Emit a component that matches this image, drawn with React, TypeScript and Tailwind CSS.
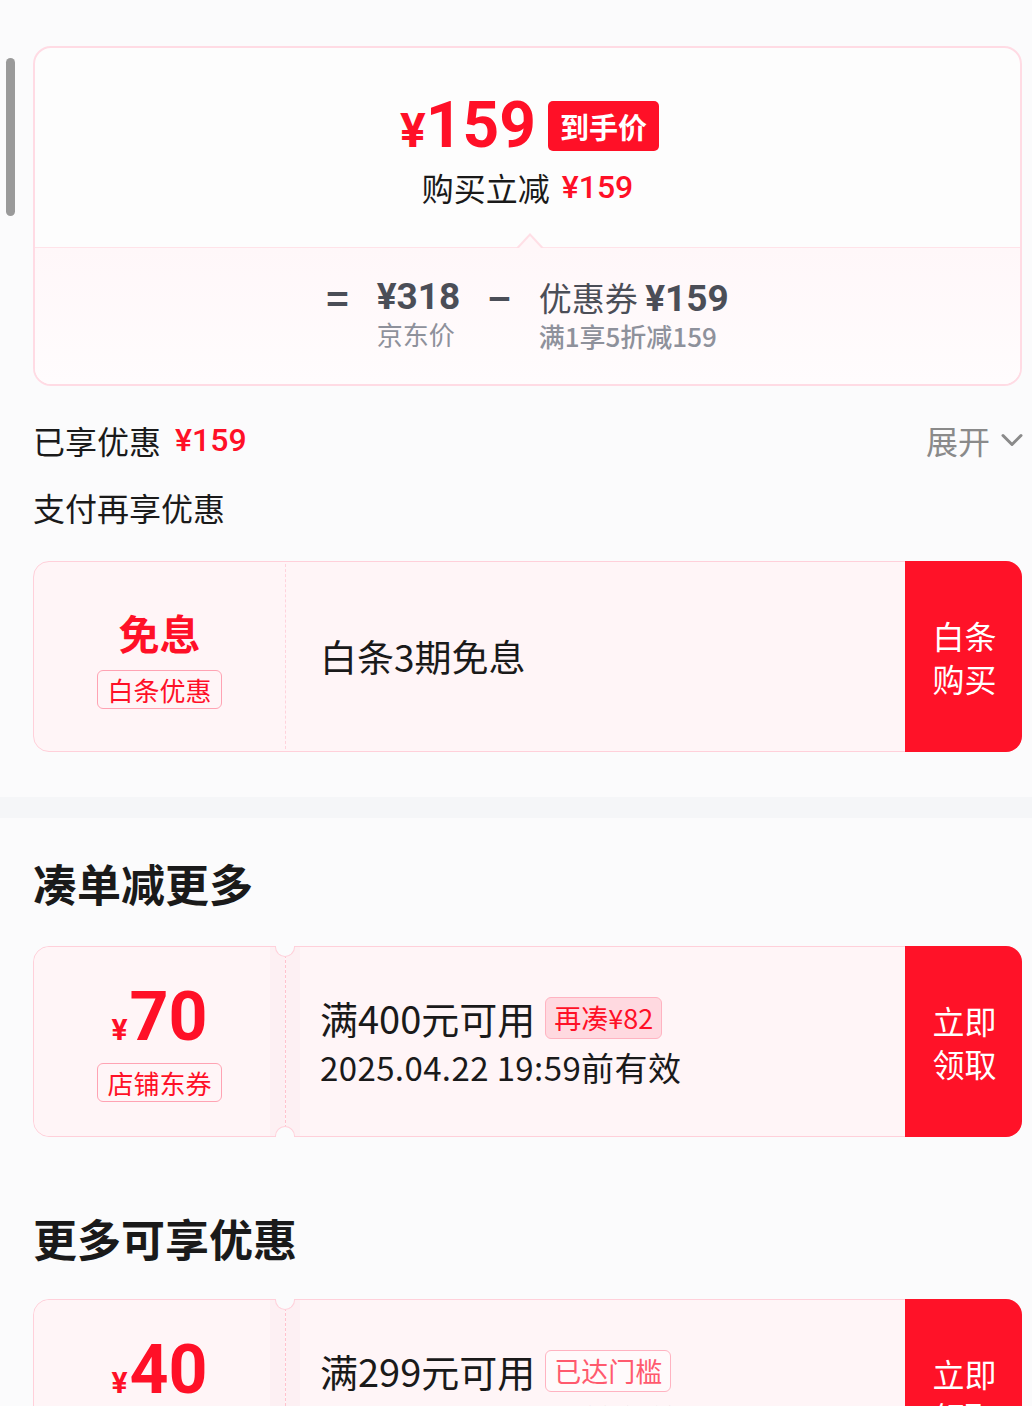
import { ChevronDown } from 'lucide-react';

const RED = 'text-[#ff1027]';

type Coupon = {
  amount: string;
  label: string;
  title: string;
  tag: string;
  tagFilled: boolean;
  expiry: string;
  expiryGray?: boolean;
};

function Tag({ children, className = '' }: { children: React.ReactNode; className?: string }) {
  return (
    <span className={`rounded-[6px] border border-[#ffa3b3] px-[9px] text-[26px] leading-[37px] text-[#ff1027] ${className}`}>
      {children}
    </span>
  );
}

function SideButton({ top, bottom }: { top: string; bottom: string }) {
  return (
    <div className="relative z-10 -my-px -mr-px flex w-[117px] flex-col items-center justify-center rounded-r-[16px] bg-[#ff1228] pl-[2px] text-[32px] leading-[43px] text-white">
      <span>{top}</span>
      <span>{bottom}</span>
    </div>
  );
}

function CouponCard({ coupon }: { coupon: Coupon }) {
  return (
    <div className="relative flex h-[191px] rounded-[16px] border border-[#ffd0da] bg-[#fff5f7]">
      <div className="flex w-[251px] flex-col items-center justify-center rounded-l-[16px] bg-[linear-gradient(to_right,#fff5f7_236px,#fdf0f3_236px)] pt-[6px]">
        <div className={`flex items-baseline font-['Roboto'] font-bold ${RED}`}>
          <span className="text-[30px] leading-none">¥</span>
          <span className="ml-[2px] text-[68px] leading-[60px]">{coupon.amount}</span>
        </div>
        <Tag className="mt-[16px]">{coupon.label}</Tag>
      </div>
      <div className="my-[8px] w-0 border-l border-dashed border-[#ffc3ce]" />
      <div className="flex flex-1 flex-col justify-center bg-[linear-gradient(to_right,#fdf0f3_14px,#fff5f7_14px)] pl-[34px]">
        <div className="flex items-center">
          <span className="text-[38px] leading-[46px] text-[#1a1a1a]">{coupon.title}</span>
          {coupon.tagFilled ? (
            <span className="ml-[10px] rounded-[6px] border border-[#ffb3c1] bg-[#ffd9e0] px-[8px] text-[27px] leading-[40px] text-[#ff1027]">
              {coupon.tag}
            </span>
          ) : (
            <span className="ml-[10px] rounded-[6px] border border-[#ffb3c1] bg-[#fffafb] px-[8px] text-[27px] leading-[40px] text-[#ff5a6e]">
              {coupon.tag}
            </span>
          )}
        </div>
        <span
          className={`mt-[4px] text-[33px] leading-[44px] tracking-[0.4px] ${coupon.expiryGray ? 'text-[#9a9a9a]' : 'text-[#1a1a1a]'}`}
        >
          {coupon.expiry}
        </span>
      </div>
      <SideButton top="立即" bottom="领取" />
      {/* ticket notches */}
      <div className="absolute left-[241px] top-[-1px] h-[11px] w-[20px] rounded-b-full border border-t-0 border-[#ffd0da] bg-[#fbfbfc]" />
      <div className="absolute bottom-[-1px] left-[241px] h-[11px] w-[20px] rounded-t-full border border-b-0 border-[#ffd0da] bg-[#fbfbfc]" />
    </div>
  );
}

const coupons: Coupon[] = [
  {
    amount: '70',
    label: '店铺东券',
    title: '满400元可用',
    tag: '再凑¥82',
    tagFilled: true,
    expiry: '2025.04.22 19:59前有效',
  },
  {
    amount: '40',
    label: '店铺东券',
    title: '满299元可用',
    tag: '已达门槛',
    tagFilled: false,
    expiry: '2025.04.22 19:59前有效',
    expiryGray: true,
  },
];

export default function App() {
  return (
    <div className="relative h-[1406px] overflow-hidden bg-[#fbfbfc] font-['Noto_Sans_CJK_SC','Noto_Sans',sans-serif] text-[#1a1a1a]">
      {/* scrollbar */}
      <div className="absolute left-[6px] top-[58px] h-[158px] w-[9px] rounded-full bg-[#9a9a9a]" />

      <div className="pl-[33px] pr-[10px] pt-[46px]">
        {/* price summary */}
        <div className="overflow-hidden rounded-[18px] border-2 border-[#ffdbe4] bg-[#fdfdfd]">
          <div className="relative flex h-[199px] flex-col items-center pt-[48px]">
            <div className="flex items-center gap-[12px] pl-[4px]">
              <div className={`flex items-baseline font-['Roboto'] font-bold ${RED}`}>
                <span className="text-[48px] leading-none">¥</span>
                <span className="text-[64px] leading-[60px]">159</span>
              </div>
              <span className="rounded-[5px] bg-[#ff1027] px-[12px] text-[29px] font-bold leading-[50px] text-white">
                到手价
              </span>
            </div>
            <div className="mt-[11px] flex items-center text-[32px] leading-[40px]">
              <span>购买立减</span>
              <span className={`ml-[12px] font-['Roboto'] font-medium ${RED}`}>¥159</span>
            </div>
            <div className="absolute bottom-[-1px] left-[481px] h-0 w-0 border-x-[14px] border-b-[15px] border-x-transparent border-b-[#ffdfe6]" />
            <div className="absolute bottom-[-2px] left-[483px] h-0 w-0 border-x-[12px] border-b-[13px] border-x-transparent border-b-[#fff7f9]" />
          </div>
          <div className="flex h-[137px] justify-center gap-[28px] border-t border-[#ffe3e9] bg-[linear-gradient(to_bottom,#fff7f9,#fffcfd)] pt-[27px] text-[#4b4e57]">
            <span className="text-[38px] font-bold leading-[44px]">=</span>
            <div className="flex flex-col">
              <span className="font-['Roboto'] text-[37px] font-bold leading-[44px]">¥318</span>
              <span className="-mt-[2px] text-[26px] leading-[34px] text-[#8e919b]">京东价</span>
            </div>
            <span className="text-[38px] font-bold leading-[44px]">−</span>
            <div className="flex flex-col">
              <span className="text-[33px] leading-[44px]">
                优惠券 <span className="font-['Roboto'] text-[37px] font-bold">¥159</span>
              </span>
              <span className="-mt-[2px] text-[26px] font-medium leading-[34px] text-[#8e919b]">满1享5折减159</span>
            </div>
          </div>
        </div>

        {/* enjoyed */}
        <div className="mt-[30px] flex h-[48px] items-center justify-between">
          <div className="flex items-center text-[32px]">
            <span>已享优惠</span>
            <span className={`ml-[14px] font-['Roboto'] font-medium ${RED}`}>¥159</span>
          </div>
          <div className="-mr-[8px] flex items-center text-[32px] text-[#8a8a8a]">
            <span>展开</span>
            <ChevronDown className="ml-[4px] h-[36px] w-[36px]" strokeWidth={2} />
          </div>
        </div>
        <div className="mt-[19px] flex h-[48px] items-center text-[32px]">支付再享优惠</div>

        {/* baitiao */}
        <div className="mt-[30px] flex h-[191px] rounded-[16px] border border-[#ffd0da] bg-[#fff5f7]">
          <div className="flex w-[251px] flex-col items-center justify-center pt-[4px]">
            <span className={`text-[41px] font-bold leading-[48px] ${RED}`}>免息</span>
            <Tag className="mt-[14px]">白条优惠</Tag>
          </div>
          <div className="my-[2px] w-0 border-l border-dashed border-[#ffd3dc]" />
          <div className="flex flex-1 items-center pl-[34px] text-[37px]">白条3期免息</div>
          <SideButton top="白条" bottom="购买" />
        </div>
      </div>

      <div className="mt-[45px] h-[21px] bg-[#f5f6f8]" />

      <div className="pl-[33px] pr-[10px]">
        <div className="mt-[37px] flex h-[56px] items-center text-[44px] font-bold">凑单减更多</div>
        <div className="mt-[35px]">
          <CouponCard coupon={coupons[0]} />
        </div>
        <div className="mt-[73px] flex h-[56px] items-center text-[44px] font-bold">更多可享优惠</div>
        <div className="mt-[33px]">
          <CouponCard coupon={coupons[1]} />
        </div>
      </div>
    </div>
  );
}
